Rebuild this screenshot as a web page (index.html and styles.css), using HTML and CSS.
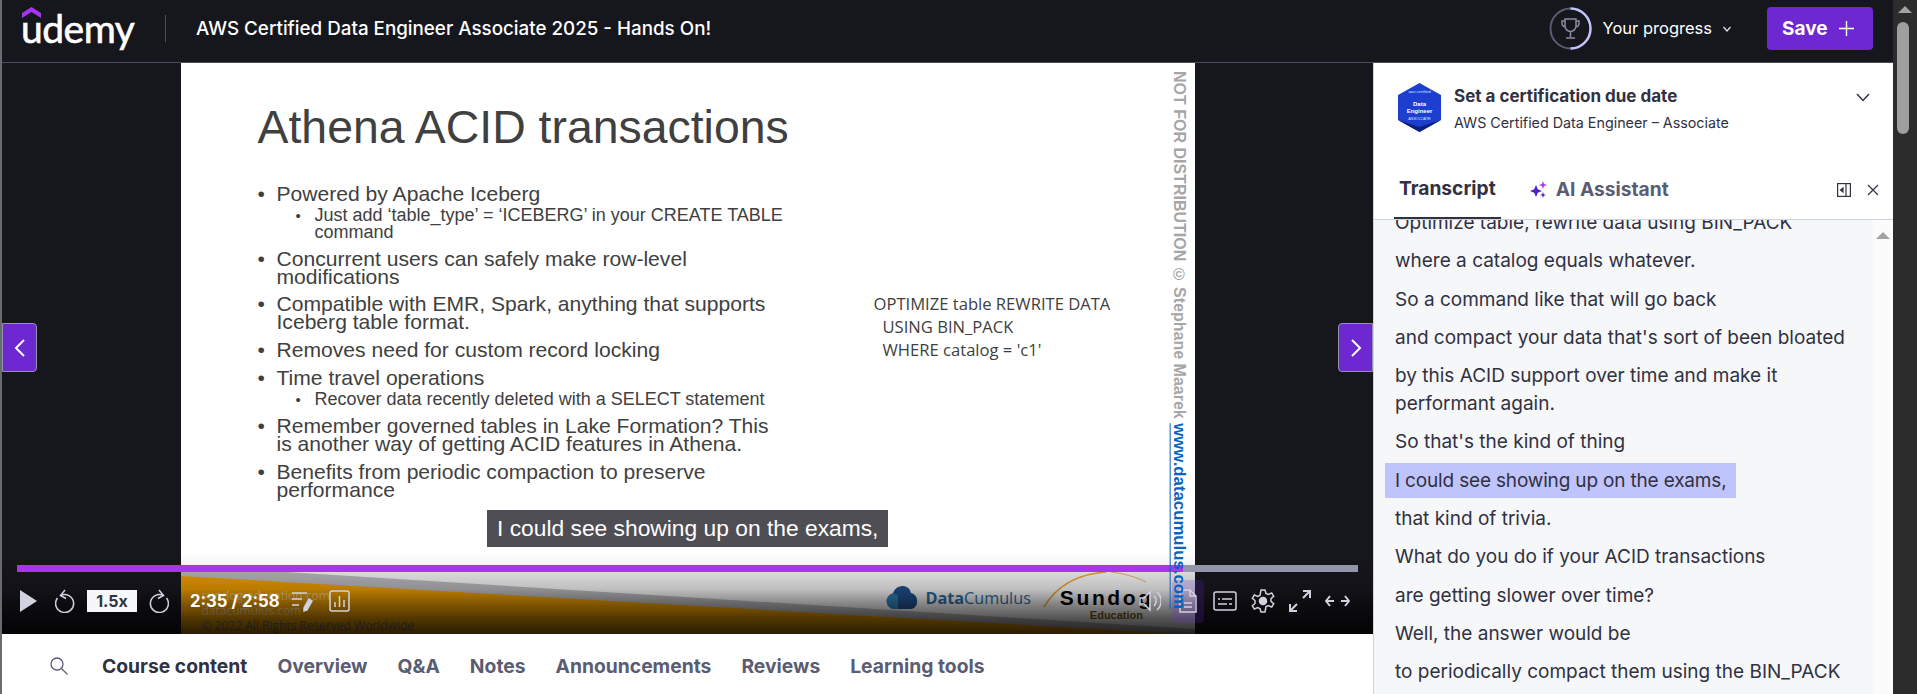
FILE: index.html
```html
<!DOCTYPE html>
<html lang="en">
  <head>
    <meta charset="UTF-8" />
    <meta name="viewport" content="width=device-width, initial-scale=1.0" />
    <title>AWS Certified Data Engineer Associate 2025 - Hands On!</title>
    <link rel="stylesheet" href="styles.css">
  </head>
  <body>
    <div class="page">
      <header class="topbar">
        <div class="logo">
          <svg class="logo-caret" width="19" height="11" viewBox="0 0 19 11"><path d="M9.500 0 19 6v5L9.500 5 0 11V6z" fill="#a435f0"/></svg>
          <span class="logo-text">udemy</span>
        </div>
        <div class="topbar-divider"></div>
        <h1 class="course-title">AWS Certified Data Engineer Associate 2025 - Hands On!</h1>
        <div class="progress">
          <svg width="43" height="43" viewBox="0 0 43 43" fill="none">
            <circle cx="21.5" cy="21.5" r="20" stroke="#595c73" stroke-width="2"/>
            <path d="M21.5 1.5a20 20 0 0 1 0 40" stroke="#c0c4fc" stroke-width="2.4"/>
            <path d="M16 12h11v7a5.500 5.500 0 0 1-11 0zM16 14h-3v2a4 4 0 0 0 3.500 4M27 14h3v2a4 4 0 0 1-3.500 4M21.500 24.500V30M17 31h9" stroke="#8b8d9f" stroke-width="1.5"/>
          </svg>
          <span class="progress-label">Your progress</span>
          <svg width="10" height="10" viewBox="0 0 10 10" fill="none"><path d="M1.500 3 5 7l3.500-4" stroke="#e4e4ea" stroke-width="1.200"/></svg>
        </div>
        <button class="save-button">Save
          <svg width="15" height="15" viewBox="0 0 15 15" fill="none"><path d="M7.500 0v15M0 7.500h15" stroke="#fff" stroke-width="1.400"/></svg>
        </button>
      </header>

      <div class="main">
        <div class="content-col">
          <div class="player">
            <div class="slide">
              <div class="slide-main">
                <h2 class="slide-title">Athena ACID transactions</h2>
                <ul class="slide-list">
                  <li>Powered by Apache Iceberg
                    <ul class="slide-sublist"><li>Just add ‘table_type’ = ‘ICEBERG’ in your CREATE TABLE command</li></ul>
                  </li>
                  <li>Concurrent users can safely make row-level modifications</li>
                  <li>Compatible with EMR, Spark, anything that supports Iceberg table format.</li>
                  <li>Removes need for custom record locking</li>
                  <li>Time travel operations
                    <ul class="slide-sublist"><li>Recover data recently deleted with a SELECT statement</li></ul>
                  </li>
                  <li>Remember governed tables in Lake Formation? This is another way of getting ACID features in Athena.</li>
                  <li>Benefits from periodic compaction to preserve performance</li>
                </ul>
              </div>
              <div class="slide-code">
                <div>OPTIMIZE table REWRITE DATA</div>
                <div class="slide-code-indent">USING BIN_PACK</div>
                <div class="slide-code-indent">WHERE catalog = 'c1'</div>
              </div>
              <div class="slide-side">NOT FOR DISTRIBUTION © Stephane Maarek <span class="slide-url">www.datacumulus.com</span></div>

              <svg class="slide-swoosh" width="1014" height="62" viewBox="0 0 1014 62" fill="none">
                <rect width="1014" height="62" fill="#eeeeee"/>
                <polygon points="105,0 1014,57 1014,62 0,62 0,0" fill="#b4b4b8"/>
                <polygon points="0,4 1000,62 0,62" fill="#e89a00"/>
                <path d="M863 35C875 15 895 2 925 0" stroke="#e0a030" stroke-width="1.500"/>
                <path d="M930 0C945 2 955 5 965 10" stroke="#d8b060" stroke-width="1"/>
              </svg>
              <div class="slide-foot">
                <div>sundog-education.com</div>
                <div>datacumulus.com</div>
                <div class="slide-copy">© 2022 All Rights Reserved Worldwide</div>
              </div>
              <div class="slide-brands">
                <svg width="35" height="24" viewBox="0 0 35 24"><path d="M9 24a8 8 0 0 1-2-15.800A10 10 0 0 1 18 1a9 9 0 0 1 7 7 8.500 8.500 0 0 1 1 16z" fill="#1f4f8b"/><path d="M8 24a7.500 7.500 0 0 1 0-15 7.500 7.500 0 0 1 4 1v14z" fill="#2f7fb5"/></svg>
                <span class="brand-data"><b>Data</b>Cumulus</span>
                <span class="brand-sundog">Sundog<small>Education</small></span>
              </div>
            </div>

            <button class="nav-arrow nav-arrow-left">
              <svg width="12" height="20" viewBox="0 0 12 20" fill="none"><path d="M10 2 2 10l8 8" stroke="#fff" stroke-width="2"/></svg>
            </button>
            <button class="nav-arrow nav-arrow-right">
              <svg width="12" height="20" viewBox="0 0 12 20" fill="none"><path d="m2 2 8 8-8 8" stroke="#fff" stroke-width="2"/></svg>
            </button>

            <div class="caption">I could see showing up on the exams,</div>

            <div class="player-shade"></div>
            <div class="controls">
              <div class="progress-bar"><div class="progress-played"></div></div>
              <div class="control-row">
                <div class="control-group">
                  <svg class="icon-play" width="17" height="22" viewBox="0 0 17 22"><path d="M0 0 17 11 0 22z" fill="#d1d2e0"/></svg>
                  <svg width="20" height="24" viewBox="0 0 20 24" fill="none" stroke="#d1d2e0" stroke-width="1.500"><path d="M5.500 6.500a9 9 0 1 1-3 2.500"/><path d="M10 1 5.500 6.500l5.500 3"/></svg>
                  <span class="speed">1.5x</span>
                  <svg width="20" height="24" viewBox="0 0 20 24" fill="none" stroke="#d1d2e0" stroke-width="1.500"><path d="M14.500 6.500a9 9 0 1 0 3 2.500"/><path d="M10 1l4.500 5.500-5.500 3"/></svg>
                  <span class="time">2:35 / 2:58</span>
                  <svg width="22" height="22" viewBox="0 0 22 22" fill="none" stroke="#d1d2e0" stroke-width="1.500"><path d="M0 3h15M0 9h10M0 15h7"/><path d="m17 9 3 2-5 9-3 1 0-3z" fill="#d1d2e0"/></svg>
                  <svg class="icon-chart" width="21" height="22" viewBox="0 0 21 22" fill="none" stroke="#d1d2e0" stroke-width="1.500"><rect x="1" y="1" width="19" height="20" rx="2"/><path d="M6 17v-5M10.500 17V6M15 17v-7"/></svg>
                </div>
                <div class="control-group control-group-right">
                  <svg width="22" height="24" viewBox="0 0 22 24" fill="none" stroke="#d1d2e0" stroke-width="1.500"><path d="M1 9h4l6-6v18l-6-6H1z"/><path d="M15 7a7 7 0 0 1 0 10M18 3a12 12 0 0 1 0 18"/></svg>
                  <span class="transcript-toggle">
                    <svg width="18" height="24" viewBox="0 0 18 24" fill="none" stroke="#d1d2e0" stroke-width="1.500"><path d="M1 1h10l6 6v16H1zM11 1v6h6M5 14h8M5 18h8"/></svg>
                  </span>
                  <svg width="24" height="20" viewBox="0 0 24 20" fill="none" stroke="#d1d2e0" stroke-width="1.500"><rect x="1" y="1" width="22" height="18" rx="2"/><path d="M5 8h2M9 8h10M5 13h9M16 13h3"/></svg>
                  <svg width="24" height="24" viewBox="0 0 24 24" fill="none" stroke="#d1d2e0" stroke-width="1.500"><circle cx="12" cy="12" r="3.500" fill="#d1d2e0"/><path d="M10 1h4l1 3.500 2.500 1 3.200-1.600 2 3.400-2.700 2.200v3l2.700 2.200-2 3.400-3.200-1.600-2.500 1L14 23h-4l-1-3.500-2.500-1-3.200 1.600-2-3.400L4 14.500v-3L1.300 9.300l2-3.400 3.200 1.600 2.500-1z"/></svg>
                  <svg width="22" height="22" viewBox="0 0 22 22" fill="none" stroke="#d1d2e0" stroke-width="2"><path d="M14 1h7v7M21 1l-7 7M8 21H1v-7M1 21l7-7"/></svg>
                  <svg width="25" height="12" viewBox="0 0 25 12" fill="none" stroke="#d1d2e0" stroke-width="2"><path d="M9 6H1M5 1 1 6l4 5M16 6h8M20 1l4 5-4 5"/></svg>
                </div>
              </div>
            </div>
          </div>

          <nav class="course-nav">
            <svg class="course-search" width="18" height="18" viewBox="0 0 18 18" fill="none" stroke="#595c73" stroke-width="1.300"><circle cx="7" cy="7" r="6"/><path d="m11.500 11.500 6 6"/></svg>
            <a class="course-nav-item active">Course content</a>
            <a class="course-nav-item">Overview</a>
            <a class="course-nav-item">Q&amp;A</a>
            <a class="course-nav-item">Notes</a>
            <a class="course-nav-item">Announcements</a>
            <a class="course-nav-item">Reviews</a>
            <a class="course-nav-item">Learning tools</a>
          </nav>
        </div>

        <aside class="sidebar">
          <div class="cert">
            <svg width="43" height="49" viewBox="0 0 43 49">
              <polygon points="21.500,0 43,12 43,37 21.500,49 0,37 0,12" fill="#1c3fd0"/>
              <polygon points="21.500,44 43,37 21.500,49 0,37" fill="#0c1f7a"/>
              <text x="21.500" y="10" class="badge-small">aws certified</text>
              <text x="21.500" y="23" class="badge-big">Data</text>
              <text x="21.500" y="30" class="badge-big">Engineer</text>
              <text x="21.500" y="37" class="badge-small">ASSOCIATE</text>
            </svg>
            <div class="cert-text">
              <div class="cert-title">Set a certification due date</div>
              <div class="cert-sub">AWS Certified Data Engineer – Associate</div>
            </div>
            <svg class="cert-chevron" width="14" height="9" viewBox="0 0 14 9" fill="none"><path d="m1 1 6 6.500L13 1" stroke="#303141" stroke-width="1.500"/></svg>
          </div>

          <div class="tabs">
            <div class="tab active">Transcript</div>
            <div class="tab">
              <svg width="17" height="17" viewBox="0 0 17 17"><path d="M6 4 7.800 8.200 12 10 7.800 11.800 6 16 4.200 11.800 0 10 4.200 8.200z" fill="#5022c3"/><path d="M13 0l1 3 3 1-3 1-1 3-1-3-3-1 3-1z" fill="#a435f0"/><path d="M13 11l.8 2.200 2.200.8-2.200.8-.8 2.200-.8-2.200-2.200-.8 2.200-.8z" fill="#5022c3"/></svg>
              AI Assistant
            </div>
            <svg class="tab-tool" width="14" height="14" viewBox="0 0 14 14" fill="none" stroke="#303141" stroke-width="1.200"><rect x=".6" y=".6" width="12.800" height="12.800"/><path d="M9 .6v12.800"/><path d="M6 5 3.500 7 6 9z" fill="#303141"/></svg>
            <svg class="tab-close" width="12" height="12" viewBox="0 0 12 12" fill="none" stroke="#303141" stroke-width="1.200"><path d="m1 1 10 10M11 1 1 11"/></svg>
          </div>

          <div class="transcript">
            <div class="cues">
              <p class="cue"><span>Optimize table, rewrite data using BIN_PACK</span></p>
              <p class="cue"><span>where a catalog equals whatever.</span></p>
              <p class="cue"><span>So a command like that will go back</span></p>
              <p class="cue"><span>and compact your data that's sort of been bloated</span></p>
              <p class="cue"><span>by this ACID support over time and make it performant again.</span></p>
              <p class="cue"><span>So that's the kind of thing</span></p>
              <p class="cue current"><span>I could see showing up on the exams,</span></p>
              <p class="cue"><span>that kind of trivia.</span></p>
              <p class="cue"><span>What do you do if your ACID transactions</span></p>
              <p class="cue"><span>are getting slower over time?</span></p>
              <p class="cue"><span>Well, the answer would be</span></p>
              <p class="cue"><span>to periodically compact them using the BIN_PACK</span></p>
            </div>
            <div class="transcript-scroll"><div class="scroll-up scroll-up-light"></div></div>
          </div>
        </aside>
      </div>
    </div>
    <div class="window-scroll">
      <div class="scroll-up"></div>
      <div class="window-thumb"></div>
    </div>
  </body>
</html>
```

FILE: styles.css
```css
* {
  box-sizing: border-box;
}

html,
body {
  height: 100%;
}

body {
  display: flex;
  margin: 0;
  overflow: hidden;
  font-family: Inter, "Liberation Sans", sans-serif;
  color: #303141;
  background-color: #6a6a72;
}

.page {
  flex-grow: 1;
  display: flex;
  flex-direction: column;
  min-width: 0;
  margin-left: 2px;
}

/* top bar */
.topbar {
  display: flex;
  align-items: center;
  height: 63px;
  padding: 0 20px 5px 19px;
  background-color: #16161d;
  border-bottom: 1px solid #4c4c5e;
  color: white;
}

.logo {
  position: relative;
  width: 114px;
  height: 43px;
}

.logo-caret {
  position: absolute;
  top: 0;
  left: 1px;
}

.logo-text {
  display: block;
  margin-top: -3px;
  font-family: Lato, sans-serif;
  font-size: 39px;
  line-height: 48px;
  letter-spacing: -0.5px;
  -webkit-text-stroke: 0.6px white;
}

.topbar-divider {
  width: 1px;
  height: 27px;
  margin: 0 30px;
  background-color: #4c4c5e;
}

.course-title {
  margin: 0;
  font-size: 18.8px;
  font-weight: 500;
}

.progress {
  display: flex;
  align-items: center;
  margin-left: auto;
  font-size: 16.5px;
}

.progress-label {
  margin: 0 10px 2px 11px;
}

.save-button {
  display: flex;
  align-items: center;
  gap: 11px;
  width: 106px;
  height: 43px;
  margin-left: 35px;
  padding: 0 0 0 15px;
  background-color: #6d28d2;
  color: white;
  border: none;
  border-radius: 4px;
  font-family: inherit;
  font-size: 19px;
  font-weight: 700;
}

/* player */
.main {
  flex-grow: 1;
  display: flex;
  min-height: 0;
}

.content-col {
  display: flex;
  flex-direction: column;
  width: 1371px;
}

.player {
  position: relative;
  display: flex;
  justify-content: center;
  height: 571px;
  background-color: #16161d;
  overflow: hidden;
}

.slide {
  position: relative;
  display: flex;
  width: 1014px;
  padding-left: 77px;
  background-color: white;
  color: #404040;
  font-family: "Liberation Sans", Arial, sans-serif;
}

.slide-main {
  width: 531px;
  padding-top: 39px;
}

.slide-title {
  margin: 0 0 33px;
  font-size: 46.4px;
  font-weight: 400;
  line-height: 50px;
  white-space: nowrap;
}

.slide-list,
.slide-sublist {
  margin: 0;
  padding: 0;
  list-style: none;
}

.slide-list > li {
  margin-top: 9.7px;
  padding-left: 19px;
  font-size: 21.1px;
  line-height: 18px;
  text-indent: -19px;
}

.slide-list > li::before {
  content: "•";
  display: inline-block;
  width: 19px;
  text-indent: 0;
}

.slide-sublist {
  margin: 4px 0 0 19px;
  width: 495px;
  font-size: 18px;
  line-height: 16px;
}

.slide-sublist li {
  padding-left: 19px;
  text-indent: -19px;
}

.slide-sublist li::before {
  content: "•";
  display: inline-block;
  width: 19px;
  text-indent: 0;
  font-size: 15px;
}

.slide-code {
  margin: 229px 0 0 85px;
  font-family: "Open Sans", sans-serif;
  font-size: 16.6px;
  line-height: 23px;
  white-space: nowrap;
}

.slide-code-indent {
  padding-left: 9px;
}

.slide-side {
  position: relative;
  z-index: 1;
  margin-left: auto;
  padding: 8px 0 0;
  margin-right: 8px;
  writing-mode: vertical-rl;
  font-size: 16px;
  font-weight: 700;
  line-height: 16px;
  color: #a6a6a6;
  white-space: nowrap;
}

.slide-url {
  color: #0563c1;
  font-size: 16.8px;
  text-decoration: underline;
}

.slide-swoosh {
  position: absolute;
  left: 0;
  bottom: 0;
}

.slide-foot {
  position: absolute;
  left: 21px;
  bottom: 1px;
  font-family: "Open Sans", sans-serif;
  font-size: 12px;
  line-height: 15px;
  color: #e8c88a;
}

.slide-copy {
  color: #6c6a66;
}

.slide-brands {
  position: absolute;
  left: 705px;
  top: 522px;
  display: flex;
  align-items: flex-start;
  gap: 5px;
}

.brand-data {
  margin-top: 2px;
  font-family: "Open Sans", sans-serif;
  font-size: 16.2px;
  color: #2b6a9e;
}

.brand-sundog {
  margin-left: 24px;
  margin-top: 1px;
  font-weight: 700;
  font-size: 21px;
  letter-spacing: 2.6px;
  color: black;
}

.brand-sundog small {
  display: block;
  margin: -1px 0 0 30px;
  font-size: 11px;
  letter-spacing: 0;
  color: #6e5510;
}

.nav-arrow {
  position: absolute;
  top: 260px;
  display: flex;
  align-items: center;
  justify-content: center;
  width: 35px;
  height: 49px;
  padding: 0;
  background-color: #6d28d2;
  border: 1px solid #9194ac;
}

.nav-arrow-left {
  left: 0;
  border-radius: 0 4px 4px 0;
}

.nav-arrow-right {
  right: 0;
  border-radius: 4px 0 0 4px;
}

.caption {
  position: absolute;
  left: 485px;
  top: 447px;
  height: 37px;
  padding: 0 10px;
  background-color: #4f4e55;
  color: white;
  font-family: "Liberation Sans", Arial, sans-serif;
  font-size: 22.8px;
  line-height: 37px;
  white-space: nowrap;
}

.player-shade {
  position: absolute;
  left: 0;
  right: 0;
  bottom: 0;
  height: 80px;
  background: linear-gradient(
    rgba(0, 0, 0, 0),
    rgba(0, 0, 0, 0.08) 21%,
    rgba(0, 0, 0, 0.2) 44%,
    rgba(0, 0, 0, 0.45) 63%,
    rgba(0, 0, 0, 0.65) 81%,
    rgba(0, 0, 0, 0.82)
  );
}

.controls {
  position: absolute;
  left: 15px;
  right: 15px;
  bottom: 0;
}

.progress-bar {
  height: 7px;
  background-color: #9494ab;
}

.progress-played {
  width: 86.95%;
  height: 100%;
  background-color: #a435f0;
}

.control-row {
  display: flex;
  align-items: center;
  justify-content: space-between;
  height: 62px;
  padding: 0 8px 4px 3px;
}

.control-group {
  display: flex;
  align-items: center;
  gap: 12px;
}

.control-group-right {
  gap: 14px;
}

.icon-play {
  margin-right: 6px;
}

.icon-chart {
  margin-left: 3px;
}

.speed {
  width: 50px;
  height: 22px;
  background-color: #f6f7f9;
  color: #303141;
  font-size: 16px;
  font-weight: 700;
  line-height: 22px;
  text-align: center;
}

.time {
  margin-left: 9px;
  color: white;
  font-size: 16.7px;
  font-weight: 700;
  white-space: nowrap;
}

.transcript-toggle {
  display: flex;
  align-items: center;
  justify-content: center;
  width: 32px;
  height: 43px;
  margin: 0 -5px 0 -3px;
  background-color: rgba(109, 40, 210, 0.2);
  border-radius: 4px;
}

/* tabs under the player */
.course-nav {
  flex-grow: 1;
  display: flex;
  align-items: center;
  gap: 30px;
  padding: 3px 0 0 48px;
  background-color: white;
}

.course-search {
  margin-right: 4px;
}

.course-nav-item {
  color: #595c73;
  font-size: 19.3px;
  font-weight: 700;
  white-space: nowrap;
}

.course-nav-item.active {
  color: #303141;
}

/* sidebar */
.sidebar {
  display: flex;
  flex-direction: column;
  flex-grow: 1;
  min-width: 0;
  background-color: white;
  border-left: 1px solid #d1d2e0;
}

.cert {
  display: flex;
  align-items: flex-start;
  height: 98px;
  padding: 20px 0 0 24px;
}

.cert-text {
  margin-left: 13px;
}

.cert-title {
  margin-top: 3px;
  font-size: 17px;
  font-weight: 700;
  line-height: 20px;
}

.cert-sub {
  margin-top: 7px;
  font-size: 14.3px;
  line-height: 20px;
  color: #303141;
}

.cert-chevron {
  margin: 10px 23px 0 auto;
}

.badge-small {
  font-family: "Liberation Sans", sans-serif;
  font-size: 4px;
  fill: #dfe4ff;
  text-anchor: middle;
}

.badge-big {
  font-family: "Liberation Sans", sans-serif;
  font-size: 6px;
  font-weight: 700;
  fill: white;
  text-anchor: middle;
}

.tabs {
  display: flex;
  align-items: center;
  height: 59px;
  padding-left: 20px;
  border-bottom: 1px solid #d1d2e0;
}

.tab {
  display: flex;
  align-items: center;
  gap: 9px;
  height: 100%;
  padding: 0 5px 2px;
  margin-right: 24px;
  color: #595c73;
  font-size: 19.2px;
  font-weight: 700;
  white-space: nowrap;
}

.tab.active {
  color: #303141;
  border-bottom: 2px solid #303141;
}

.tab-tool {
  margin-left: auto;
}

.tab-close {
  margin: 0 14px 0 16px;
}

.transcript {
  flex-grow: 1;
  display: flex;
  min-height: 0;
  background-color: #f6f7f9;
  overflow: hidden;
}

.cues {
  flex-grow: 1;
  padding-left: 11px;
  margin-top: -14.5px;
}

.cue {
  margin: 0 0 3.3px;
  font-size: 19px;
  line-height: 28px;
}

.cue span {
  display: inline-block;
  max-width: 475px;
  padding: 3.5px 10px;
}

.cue.current span {
  background-color: #c0c4fc;
  letter-spacing: -0.17px;
}

.transcript-scroll {
  flex-shrink: 0;
  width: 20px;
  padding-top: 12px;
  background-color: #fbfbfb;
}

/* browser scrollbars */
.scroll-up {
  width: 0;
  margin: 0 auto;
  border-left: 7px solid transparent;
  border-right: 7px solid transparent;
  border-bottom: 7px solid #a3a3a3;
}

.window-scroll {
  flex-shrink: 0;
  width: 24px;
  padding-top: 6px;
  background-color: #2c2c2c;
}

.window-thumb {
  width: 12px;
  height: 112px;
  margin: 9px 0 0 4px;
  background-color: #9f9f9f;
  border-radius: 6px;
}
```
